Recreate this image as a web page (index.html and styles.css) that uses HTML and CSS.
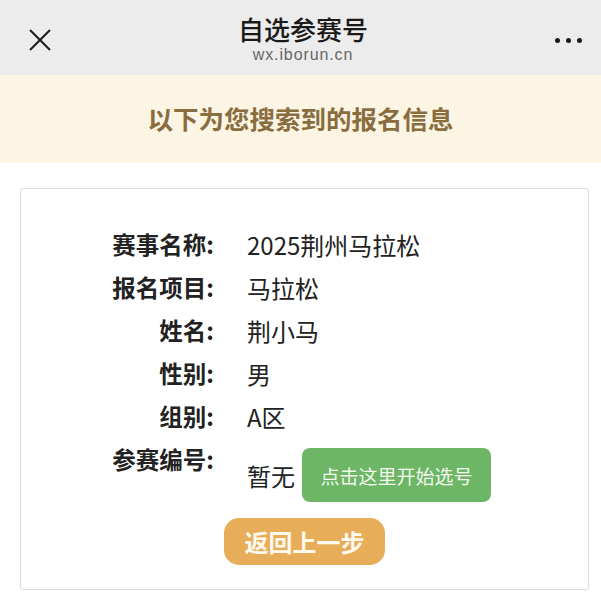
FILE: index.html
```html
<!DOCTYPE html>
<html lang="zh-CN">
<head>
<meta charset="utf-8">
<title>自选参赛号</title>
<link rel="stylesheet" href="styles.css">
</head>
<body>
<header class="topbar">
  <div class="close">
    <svg width="22" height="22" viewBox="0 0 22 22"><path d="M1 1L21 21M21 1L1 21" stroke="#1a1a1a" stroke-width="2" fill="none"/></svg>
  </div>
  <div class="titles">
    <div class="title">自选参赛号</div>
    <div class="domain">wx.iborun.cn</div>
  </div>
  <div class="more"><span></span><span></span><span></span></div>
</header>
<div class="banner">以下为您搜索到的报名信息</div>
<main class="card">
  <div class="info">
    <div class="label">赛事名称:</div><div class="value">2025荆州马拉松</div>
    <div class="label">报名项目:</div><div class="value">马拉松</div>
    <div class="label">姓名:</div><div class="value">荆小马</div>
    <div class="label">性别:</div><div class="value">男</div>
    <div class="label">组别:</div><div class="value">A区</div>
    <div class="label">参赛编号:</div>
    <div class="value bib"><span>暂无</span><a class="btn-pick">点击这里开始选号</a></div>
  </div>
  <div class="back-wrap"><a class="btn-back">返回上一步</a></div>
</main>
</body>
</html>
```
FILE: styles.css
```css
* { box-sizing: border-box; }
html, body { margin: 0; padding: 0; background: #ffffff; }
body {
  font-family: "Noto Sans CJK SC", "Noto Sans", sans-serif;
  color: #222;
  width: 601px;
}
.topbar {
  height: 75px;
  background: #ececec;
  display: flex;
  align-items: center;
}
.close {
  width: 22px;
  height: 22px;
  margin-left: 29px;
  margin-top: 5px;
  display: flex;
}
.titles {
  flex: 1;
  display: flex;
  flex-direction: column;
  align-items: center;
  margin-top: 5px;
}
.title {
  font-family: "Liberation Sans", "Noto Sans CJK SC", sans-serif;
  font-size: 26px;
  font-weight: 500;
  color: #1a1a1a;
  line-height: 30px;
}
.domain {
  font-family: "Liberation Sans", "Noto Sans", sans-serif;
  font-size: 16px;
  color: #666;
  line-height: 18px;
  letter-spacing: 0.9px;
}
.more {
  display: flex;
  gap: 6px;
  margin-right: 19px;
  margin-top: 5px;
  width: 27px;
}
.more span {
  width: 5px;
  height: 5px;
  border-radius: 50%;
  background: #1a1a1a;
}
.banner {
  height: 88px;
  background: #fcf5e4;
  display: flex;
  align-items: center;
  justify-content: center;
  font-size: 25.5px;
  font-weight: 700;
  color: #8a6d3e;
  padding-bottom: 4px;
}
.card {
  margin: 25px 0 0 20px;
  width: 569px;
  height: 402px;
  border: 1.5px solid #dcdcdc;
  border-radius: 3px;
  padding-top: 34px;
  box-shadow: 0 1px 2px rgba(0,0,0,0.05);
}
.info {
  display: grid;
  grid-template-columns: 193px 1fr;
  grid-template-rows: repeat(5, 43px) auto;
  column-gap: 33px;
}
.label {
  text-align: right;
  font-size: 23.5px;
  font-weight: 700;
  line-height: 43px;
  color: #222;
}
.value {
  font-size: 24px;
  line-height: 43px;
  color: #222;
}
.bib {
  display: flex;
  align-items: center;
  gap: 7px;
  height: 54px;
  margin-top: 10px;
}
.btn-pick {
  display: flex;
  align-items: center;
  justify-content: center;
  width: 189px;
  height: 54px;
  background: #6cb665;
  color: #f4f8ef;
  border-radius: 8px;
  font-size: 19px;
  line-height: 1;
}
.back-wrap {
  display: flex;
  justify-content: center;
  margin-top: 16px;
}
.btn-back {
  display: flex;
  align-items: center;
  justify-content: center;
  width: 161px;
  height: 47px;
  background: #e7ad59;
  color: #fffaf0;
  border-radius: 15px;
  font-size: 24px;
  font-weight: 700;
  line-height: 1;
}
```
